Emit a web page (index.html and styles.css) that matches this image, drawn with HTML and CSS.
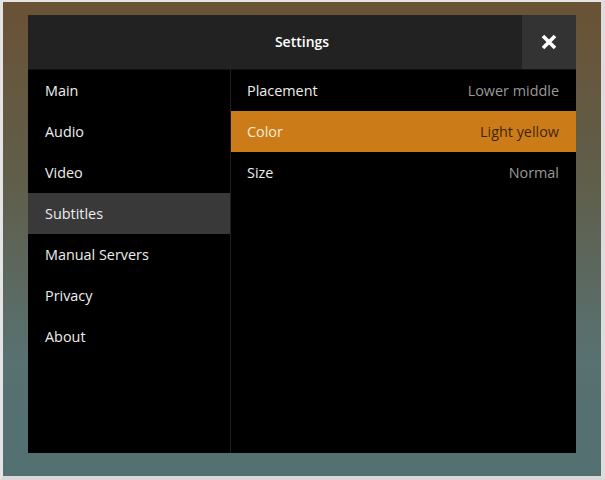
FILE: index.html
```html
<!DOCTYPE html>
<html>
<head>
<meta charset="utf-8">
<link rel="stylesheet" href="styles.css">
</head>
<body>
<div class="frame">
  <div class="dialog">
    <div class="header">
      <div class="title">Settings</div>
      <button class="close" aria-label="Close">
        <svg width="16" height="16" viewBox="0 0 16 16"><path d="M2 2 L14 14 M14 2 L2 14" stroke="#fff" stroke-width="3.6" stroke-linecap="butt"/></svg>
      </button>
    </div>
    <div class="content">
      <ul class="menu">
        <li class="item">Main</li>
        <li class="item">Audio</li>
        <li class="item">Video</li>
        <li class="item selected">Subtitles</li>
        <li class="item">Manual Servers</li>
        <li class="item">Privacy</li>
        <li class="item">About</li>
      </ul>
      <ul class="options">
        <li class="option"><span class="label">Placement</span><span class="value">Lower middle</span></li>
        <li class="option active"><span class="label">Color</span><span class="value">Light yellow</span></li>
        <li class="option"><span class="label">Size</span><span class="value">Normal</span></li>
      </ul>
    </div>
  </div>
</div>
</body>
</html>
```
FILE: styles.css
```css
* { box-sizing: border-box; }
html, body { margin: 0; padding: 0; }
body {
  width: 605px;
  height: 480px;
  font-family: "Open Sans", "Noto Sans", sans-serif;
  background: #e6e6e6;
}
.frame {
  width: 605px;
  height: 480px;
  border-style: solid;
  border-color: #e4e4e4 #dcdcdc #d8d8d8 #e4e4e4;
  border-width: 2px 4px 4px 3px;
  padding: 13px 25px 23px 25px;
  background: linear-gradient(180deg, #6a5235 0%, #5f5f4c 40%, #587171 75%, #537071 100%);
}
.dialog {
  width: 548px;
  height: 438px;
  display: flex;
  flex-direction: column;
  background: #000;
}
.header {
  height: 55px;
  flex: none;
  position: relative;
  display: flex;
  align-items: center;
  justify-content: center;
  background: #222;
  border-bottom: 1px solid #111;
}
.title {
  color: #fff;
  font-size: 14px;
  font-weight: 600;
  padding-bottom: 1px;
}
.close {
  position: absolute;
  right: 0;
  top: 0;
  width: 54px;
  height: 54px;
  border: 0;
  padding: 0;
  background: #333;
  display: flex;
  align-items: center;
  justify-content: center;
}
.content {
  flex: 1;
  display: flex;
}
.menu, .options {
  list-style: none;
  margin: 0;
  padding: 0;
}
.menu {
  width: 203px;
  flex: none;
  border-right: 1px solid #1e1e1e;
}
.options { flex: 1; }
.item, .option {
  height: 41px;
  display: flex;
  align-items: center;
  padding: 0 17px 1px 17px;
  font-size: 14.4px;
  color: #eee;
}
.item.selected { background: #393939; }
.option { justify-content: space-between; padding-left: 16px; }
.value { color: #999; }
.option.active { background: #cc7b19; }
.option.active .label { color: #f8ecd8; }
.option.active .value { color: rgba(0,0,0,0.72); }
```
